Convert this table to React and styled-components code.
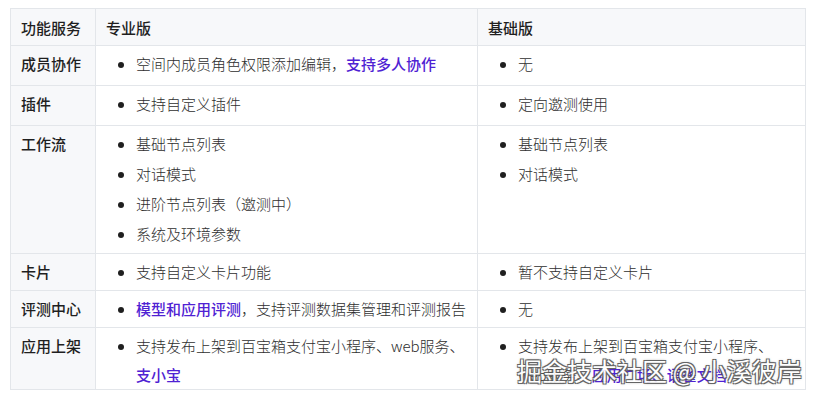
import React from "react";
import styled, { createGlobalStyle } from "styled-components";

const Global = createGlobalStyle`
  html, body { margin: 0; padding: 0; background: #ffffff; }
  body { font-family: "Noto Sans CJK SC", "Noto Sans", sans-serif; }
`;

const Page = styled.div`
  position: relative;
  width: 817px;
  height: 396px;
  padding: 8px 0 0 10px;
  box-sizing: border-box;
  overflow: hidden;
`;

const Table = styled.table`
  border-collapse: collapse;
  table-layout: fixed;
  width: 795px;
  font-size: 15px;
  font-weight: 300;
  color: #2e2e2e;
`;

const Row = styled.tr`
  height: ${(p) => p.$h}px;
`;

const HeadCell = styled.th`
  background: #f7f8fa;
  border: 1px solid #e3e6ea;
  padding: 0 10px;
  text-align: left;
  font-weight: 500;
  color: #1f1f1f;
  line-height: 21px;
  vertical-align: middle;
`;

const LabelCell = styled.td`
  background: #f7f8fa;
  border: 1px solid #e3e6ea;
  padding: 3px 10px 0;
  font-weight: 500;
  color: #1f1f1f;
  line-height: 30px;
  vertical-align: top;
`;

const Cell = styled.td`
  border: 1px solid #e3e6ea;
  padding: 3px 10px 0;
  line-height: ${(p) => p.$lh || 30}px;
  vertical-align: top;
`;

const List = styled.ul`
  margin: 0;
  padding-left: 30px;
  list-style: disc;
`;

const Item = styled.li`
  &::marker { color: #1f1f1f; }
`;

const Link = styled.span`
  color: #4f22d3;
  font-weight: 500;
`;

const Watermark = styled.div`
  position: absolute;
  left: 517px;
  top: 353px;
  font-size: 25px;
  line-height: 34px;
  color: #ffffff;
  font-weight: 400;
  white-space: nowrap;
  opacity: 0.9;
  pointer-events: none;
  text-shadow:
    -1px -1px 0 #555, 1px -1px 0 #555, -1px 1px 0 #555, 1px 1px 0 #555,
    0 0 3px #777;
`;

const rows = [
  {
    label: "成员协作",
    h: 40,
    pro: [<>空间内成员角色权限添加编辑，<Link>支持多人协作</Link></>],
    basic: ["无"],
  },
  {
    label: "插件",
    h: 40,
    pro: ["支持自定义插件"],
    basic: ["定向邀测使用"],
  },
  {
    label: "工作流",
    h: 128,
    pro: ["基础节点列表", "对话模式", "进阶节点列表（邀测中）", "系统及环境参数"],
    basic: ["基础节点列表", "对话模式"],
  },
  {
    label: "卡片",
    h: 37,
    pro: ["支持自定义卡片功能"],
    basic: ["暂不支持自定义卡片"],
  },
  {
    label: "评测中心",
    h: 37,
    pro: [<><Link>模型和应用评测</Link>，支持评测数据集管理和评测报告</>],
    basic: ["无"],
  },
  {
    label: "应用上架",
    h: 62,
    lh: 29,
    pro: [<>支持发布上架到百宝箱支付宝小程序、web服务、<Link>支小宝</Link></>],
    basic: [<>支持发布上架到百宝箱支付宝小程序、<br />web服务、<Link>应用广场、语雀文档</Link></>],
  },
];

export default function App() {
  return (
    <>
      <Global />
      <Page>
        <Table>
          <colgroup>
            <col style={{ width: 85 }} />
            <col style={{ width: 382 }} />
            <col style={{ width: 328 }} />
          </colgroup>
          <thead>
            <Row $h={37}>
              <HeadCell>功能服务</HeadCell>
              <HeadCell>专业版</HeadCell>
              <HeadCell>基础版</HeadCell>
            </Row>
          </thead>
          <tbody>
            {rows.map((r) => (
              <Row key={r.label} $h={r.h}>
                <LabelCell>{r.label}</LabelCell>
                <Cell $lh={r.lh}>
                  <List>
                    {r.pro.map((it, i) => (
                      <Item key={i}>{it}</Item>
                    ))}
                  </List>
                </Cell>
                <Cell $lh={r.lh}>
                  <List>
                    {r.basic.map((it, i) => (
                      <Item key={i}>{it}</Item>
                    ))}
                  </List>
                </Cell>
              </Row>
            ))}
          </tbody>
        </Table>
        <Watermark>掘金技术社区 @ 小溪彼岸</Watermark>
      </Page>
    </>
  );
}
